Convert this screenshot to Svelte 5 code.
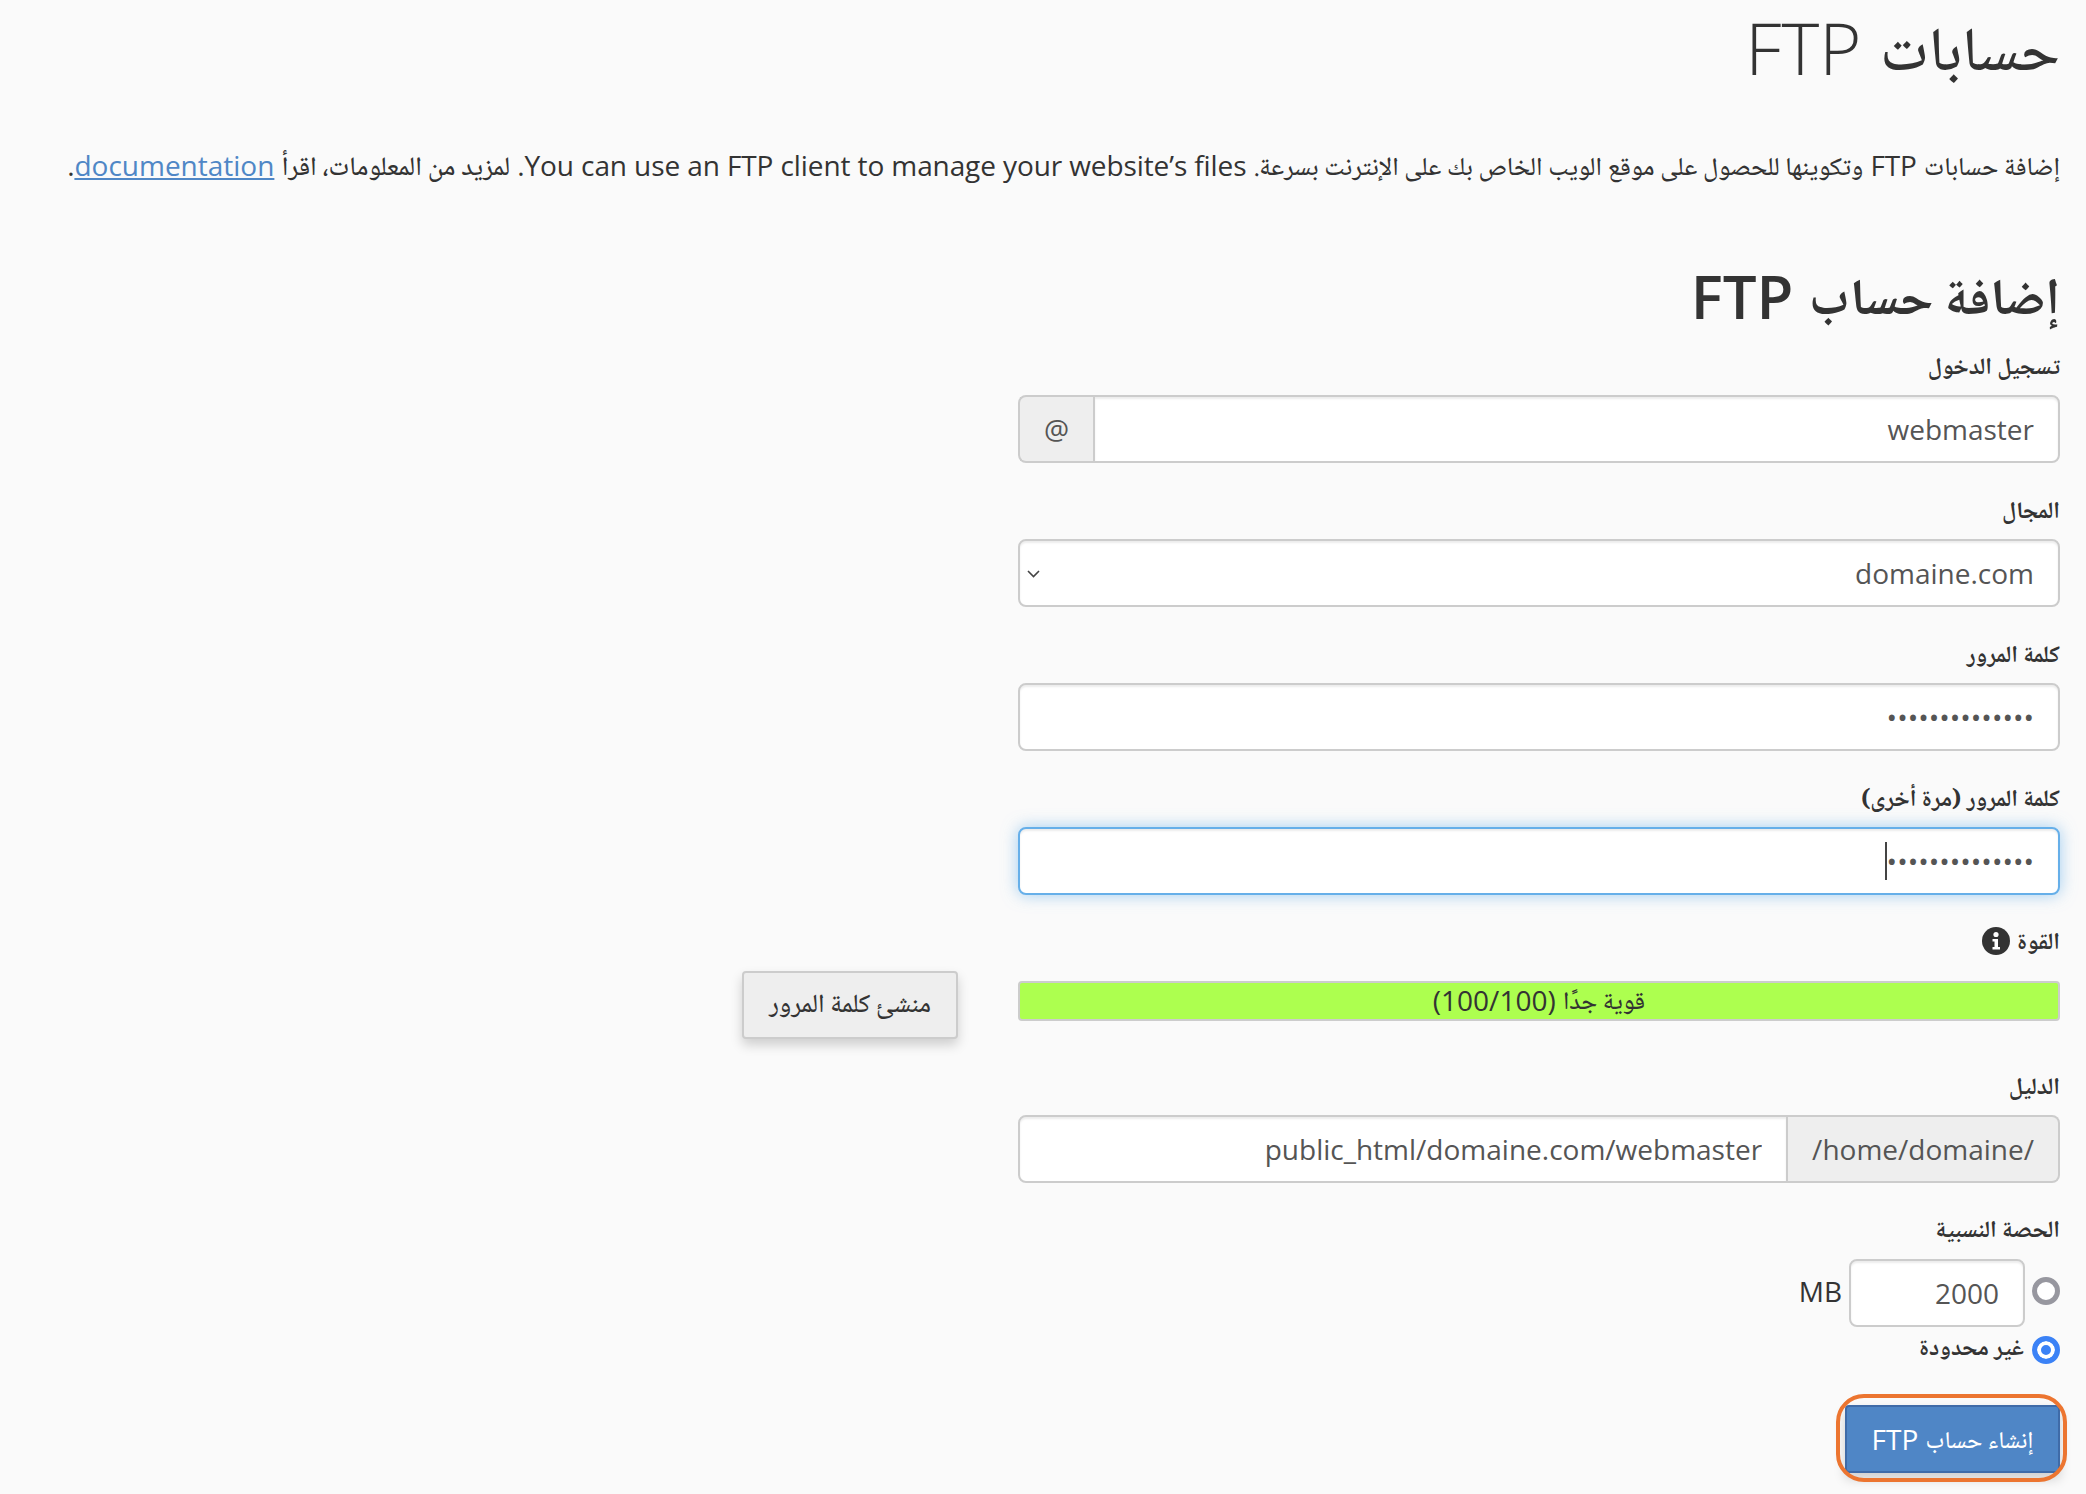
<script>
    let login = "webmaster";
    let domain = "domaine.com";
    let pass = "aaaaaaaaaaaaaa";
    let dir = "public_html/domaine.com/webmaster";
    let quota = "2000";
</script>

<div class="page" dir="rtl">
    <h1><span class="ar">حسابات</span> FTP</h1>
    <p class="intro"><span class="ar">إضافة حسابات</span> FTP <span class="ar">وتكوينها للحصول على موقع الويب الخاص بك على الإنترنت بسرعة.</span> You can use an FTP client to manage your website’s files. <span class="ar more">لمزيد من المعلومات، اقرأ</span> <a href="#doc">documentation</a>.</p>

    <h2><span class="ar">إضافة حساب</span> FTP</h2>

    <form on:submit|preventDefault>
        <div class="group">
            <label for="login"><span class="ar">تسجيل الدخول</span></label>
            <div class="joined">
                <input id="login" class="ctl" dir="rtl" value={login} readonly />
                <span class="addon at">@</span>
            </div>
        </div>

        <div class="group">
            <label for="domain"><span class="ar">المجال</span></label>
            <div class="selectbox">
                <select id="domain" class="ctl" dir="rtl">
                    <option>{domain}</option>
                </select>
                <svg class="chev" viewBox="0 0 13 8" width="13" height="8"><path d="M1 1l5.500 5.500L12 1" fill="none" stroke="#444" stroke-width="1.600"/></svg>
            </div>
        </div>

        <div class="group">
            <label for="pass"><span class="ar">كلمة المرور</span></label>
            <input id="pass" type="password" class="ctl" value={pass} readonly />
        </div>

        <div class="group">
            <label for="pass2"><span class="ar">كلمة المرور (مرة أخرى)</span></label>
            <div class="caretwrap">
                <input id="pass2" type="password" class="ctl focus" value={pass} readonly />
                <span class="caret"></span>
            </div>
        </div>

        <div class="group">
            <div class="lbl"><span class="ar">القوة</span>
                <svg class="info" viewBox="0 0 28 28" width="28" height="28">
                    <circle cx="14" cy="14" r="14" fill="#333"/>
                    <circle cx="14" cy="7.500" r="2.600" fill="#fff"/>
                    <path d="M10.500 12h5.500v8h2v2.500H10.500V20h2v-5.500h-2z" fill="#fff"/>
                </svg>
            </div>
            <div class="strength-row">
                <div class="bar"><span class="ar">قوية جدًا</span> (100/100)</div>
                <button type="button" class="gen"><span class="ar">منشئ كلمة المرور</span></button>
            </div>
        </div>

        <div class="group">
            <label for="dir"><span class="ar">الدليل</span></label>
            <div class="joined">
                <span class="addon home" dir="ltr">/home/domaine/</span>
                <input id="dir" class="ctl" dir="rtl" value={dir} readonly />
            </div>
        </div>

        <div class="quota">
            <div class="lbl"><span class="ar">الحصة النسبية</span></div>
            <div class="quota-row">
                <input type="radio" name="quota" class="radio" />
                <input class="ctl quota-input" dir="rtl" value={quota} readonly />
                <span class="mb">MB</span>
            </div>
            <label class="unlimited">
                <input type="radio" name="quota" class="radio" checked />
                <span class="ar">غير محدودة</span>
            </label>
        </div>

        <button type="submit" class="create"><span class="ar">إنشاء حساب</span> FTP</button>
    </form>
</div>

<style>
    :global(body) {
        background: #fafafa;
    }
    .page {
        box-sizing: border-box;
        height: 100vh;
        padding: 0 26px 0 0;
        font-family: "Open Sans", "Noto Naskh Arabic", sans-serif;
        font-size: 28px;
        line-height: 40px;
        color: #333;
        background: #fafafa;
    }
    .ar {
        font-family: "Noto Naskh Arabic", "Open Sans", serif;
        font-size: 26px;
        font-weight: 500;
        line-height: 0;
        vertical-align: 2px;
    }
    h1 {
        margin: 0;
        padding-top: 8px;
        font-size: 72px;
        line-height: 79px;
        font-weight: 300;
    }
    h1 .ar {
        font-size: 62px;
        font-weight: 500;
        vertical-align: 5px;
    }
    .intro {
        margin: 58px 0 0;
        white-space: nowrap;
        letter-spacing: -0.1px;
    }
    .intro .ar {
        font-size: 25.600px;
        letter-spacing: 0;
        vertical-align: 1px;
    }
    .intro .more {
        font-size: 26.400px;
    }
    .intro a {
        color: #4f87c6;
        letter-spacing: 0;
    }
    h2 {
        margin: 78px 0 0;
        font-size: 60px;
        line-height: 66px;
        font-weight: 600;
    }
    h2 .ar {
        font-size: 51px;
        font-weight: 700;
        vertical-align: 5px;
    }
    form {
        margin-top: 16px;
    }
    .group {
        margin-bottom: 26px;
    }
    label, .lbl {
        display: block;
        margin-bottom: 10px;
        font-weight: 700;
    }
    label .ar, .lbl .ar {
        font-size: 23.500px;
        font-weight: 700;
    }
    .ctl {
        box-sizing: border-box;
        display: block;
        width: 1042px;
        height: 68px;
        padding: 0 24px;
        border: 2px solid #ccc;
        border-radius: 8px;
        background: #fff;
        color: #555;
        font: inherit;
        outline: none;
        box-shadow: inset 0 2px 2px rgba(0, 0, 0, 0.075);
    }
    .joined {
        display: flex;
        width: 1042px;
        height: 68px;
    }
    .joined .ctl {
        flex: 1;
        width: auto;
        min-width: 0;
    }
    .addon {
        box-sizing: border-box;
        display: flex;
        align-items: center;
        justify-content: center;
        height: 68px;
        border: 2px solid #ccc;
        background: #eee;
        color: #555;
        padding: 0 24px;
    }
    .at {
        width: 75px;
        border-right: 0;
        border-radius: 8px 0 0 8px;
    }
    .joined .ctl:first-child {
        border-radius: 0 8px 8px 0;
    }
    .home {
        border-left: 0;
        border-radius: 0 8px 8px 0;
    }
    .joined .home + .ctl {
        border-radius: 8px 0 0 8px;
    }
    .selectbox, .caretwrap {
        position: relative;
        width: 1042px;
    }
    select.ctl {
        appearance: none;
    }
    .chev {
        position: absolute;
        left: 9px;
        top: 31px;
        pointer-events: none;
    }
    .focus {
        border-color: #66afe9;
        box-shadow: inset 0 2px 2px rgba(0, 0, 0, 0.075), 0 0 16px rgba(102, 175, 233, 0.6);
    }
    .caret {
        position: absolute;
        left: 867px;
        top: 15px;
        width: 2px;
        height: 38px;
        background: #444;
    }
    .lbl {
        display: flex;
        align-items: center;
        gap: 7px;
        height: 40px;
    }
    .lbl .ar {
        line-height: 40px;
        margin-top: 6px;
    }
    .strength-row {
        display: flex;
        align-items: flex-start;
        gap: 60px;
    }
    .bar {
        box-sizing: border-box;
        flex: none;
        width: 1042px;
        height: 40px;
        margin-top: 10px;
        border: 2px solid #ccc;
        border-radius: 4px;
        background: #adff4f;
        color: #333;
        text-align: center;
        line-height: 34px;
    }
    .bar .ar {
        font-size: 25px;
    }
    .gen {
        box-sizing: border-box;
        flex: none;
        width: 216px;
        height: 68px;
        padding: 0;
        border: 2px solid #ccc;
        border-radius: 4px;
        background: #eee;
        color: #333;
        font: inherit;
        white-space: nowrap;
        box-shadow: 0 6px 12px rgba(0, 0, 0, 0.175);
    }
    .gen .ar {
        vertical-align: 4px;
    }
    .quota-row {
        display: flex;
        align-items: center;
        height: 68px;
        gap: 7px;
    }
    .radio {
        appearance: none;
        box-sizing: border-box;
        flex: none;
        width: 28px;
        height: 28px;
        margin: 0;
        border: 5px solid #97979f;
        border-radius: 50%;
        background: #fff;
    }
    .radio:checked {
        border-color: #3b82f6;
        box-shadow: inset 0 0 0 4px #fff;
        background: #3b82f6;
    }
    .quota-row .radio {
        margin-bottom: 4px;
    }
    .quota-input {
        width: 176px;
    }
    .mb {
        padding-bottom: 4px;
    }
    .unlimited {
        display: flex;
        align-items: center;
        gap: 8px;
        margin: 3px 0 0;
    }
    .unlimited .ar {
        line-height: 40px;
        margin-top: 0;
    }
    .create {
        position: relative;
        display: block;
        box-sizing: border-box;
        width: 215px;
        height: 68px;
        padding: 0;
        margin-top: 35px;
        border: 2px solid #3f6ba8;
        border-radius: 4px;
        background: #4f86c6;
        color: #fff;
        font: inherit;
        white-space: nowrap;
        box-shadow: 0 6px 12px rgba(0, 0, 0, 0.175);
    }
    .create .ar {
        font-size: 24px;
    }
    .create::after {
        content: "";
        position: absolute;
        inset: -13px -9px -11px -11px;
        border: 4px solid #ec7530;
        border-radius: 28px;
    }
</style>
